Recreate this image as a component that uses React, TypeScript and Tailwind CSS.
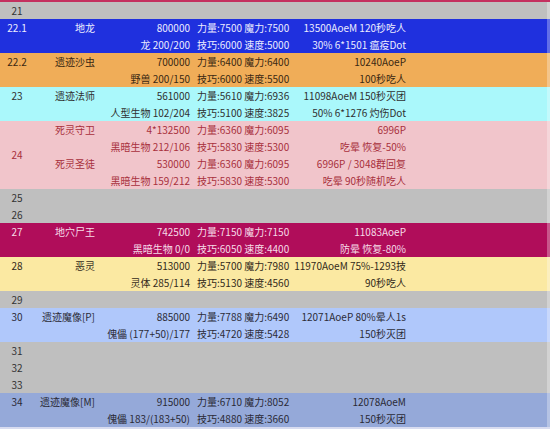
type Line = { name?: string; hp?: string; stats?: string; note?: string }

type Group = { id: string; bg: string; text: string; center?: boolean; lines: Line[] }

const GROUPS: Group[] = [
  { id: '21', bg: 'bg-[#bfbfbf]', text: 'text-[#333333]', lines: [{}] },
  {
    id: '22.1',
    bg: 'bg-[#1f30de]',
    text: 'text-[#ececff]',
    lines: [
      { name: '地龙', hp: '800000', stats: '力量:7500 魔力:7500', note: '13500AoeM 120秒吃人' },
      { hp: '龙 200/200', stats: '技巧:6000 速度:5000', note: '30% 6*1501 瘟疫Dot' }
    ]
  },
  {
    id: '22.2',
    bg: 'bg-[#f0ad58]',
    text: 'text-[#3a2812]',
    lines: [
      { name: '遗迹沙虫', hp: '700000', stats: '力量:6400 魔力:6400', note: '10240AoeP' },
      { hp: '野兽 200/150', stats: '技巧:6000 速度:5500', note: '100秒吃人' }
    ]
  },
  {
    id: '23',
    bg: 'bg-[#aaf8fb]',
    text: 'text-[#303030]',
    lines: [
      { name: '遗迹法师', hp: '561000', stats: '力量:5610 魔力:6936', note: '11098AoeM 150秒灭团' },
      { hp: '人型生物 102/204', stats: '技巧:5100 速度:3825', note: '50% 6*1276 灼伤Dot' }
    ]
  },
  {
    id: '24',
    bg: 'bg-[#f1c5cb]',
    text: 'text-[#a8303c]',
    center: true,
    lines: [
      { name: '死灵守卫', hp: '4*132500', stats: '力量:6360 魔力:6095', note: '6996P' },
      { hp: '黑暗生物 212/106', stats: '技巧:5830 速度:5300', note: '吃晕 恢复-50%' },
      { name: '死灵圣徒', hp: '530000', stats: '力量:6360 魔力:6095', note: '6996P / 3048群回复' },
      { hp: '黑暗生物 159/212', stats: '技巧:5830 速度:5300', note: '吃晕 90秒随机吃人' }
    ]
  },
  { id: '25', bg: 'bg-[#bfbfbf]', text: 'text-[#333333]', lines: [{}] },
  { id: '26', bg: 'bg-[#bfbfbf]', text: 'text-[#333333]', lines: [{}] },
  {
    id: '27',
    bg: 'bg-[#b00d5a]',
    text: 'text-[#f6dce8]',
    lines: [
      { name: '地穴尸王', hp: '742500', stats: '力量:7150 魔力:7150', note: '11083AoeP' },
      { hp: '黑暗生物 0/0', stats: '技巧:6050 速度:4400', note: '防晕 恢复-80%' }
    ]
  },
  {
    id: '28',
    bg: 'bg-[#fbe9a2]',
    text: 'text-[#33291a]',
    lines: [
      { name: '恶灵', hp: '513000', stats: '力量:5700 魔力:7980', note: '11970AoeM 75%-1293技' },
      { hp: '灵体 285/114', stats: '技巧:5130 速度:4560', note: '90秒吃人' }
    ]
  },
  { id: '29', bg: 'bg-[#bfbfbf]', text: 'text-[#333333]', lines: [{}] },
  {
    id: '30',
    bg: 'bg-[#b0c8fb]',
    text: 'text-[#2c2c38]',
    lines: [
      { name: '遗迹魔像[P]', hp: '885000', stats: '力量:7788 魔力:6490', note: '12071AoeP 80%晕人1s' },
      { hp: '傀儡 (177+50)/177', stats: '技巧:4720 速度:5428', note: '150秒灭团' }
    ]
  },
  { id: '31', bg: 'bg-[#bfbfbf]', text: 'text-[#333333]', lines: [{}] },
  { id: '32', bg: 'bg-[#bfbfbf]', text: 'text-[#333333]', lines: [{}] },
  { id: '33', bg: 'bg-[#bfbfbf]', text: 'text-[#333333]', lines: [{}] },
  {
    id: '34',
    bg: 'bg-[#95a9d9]',
    text: 'text-[#2a2a36]',
    lines: [
      { name: '遗迹魔像[M]', hp: '915000', stats: '力量:6710 魔力:8052', note: '12078AoeM' },
      { hp: '傀儡 183/(183+50)', stats: '技巧:4880 速度:3660', note: '150秒灭团' }
    ]
  }
]

export default function App() {
  return (
    <div className="flex h-[429px] w-[550px] flex-col overflow-hidden bg-[#bfbfbf] font-['Noto_Sans_CJK_SC',sans-serif] text-[10px]">
      {/* top rule */}
      <div className="h-[2px] w-full shrink-0 bg-[#c4305f]" />

      {GROUPS.map((g) => (
        <div key={g.id} className={`flex shrink-0 border-r-[3px] border-white/30 ${g.bg} ${g.text}`}>
          {/* id: first line, or centred for merged rows */}
          <div
            className={`flex w-8 shrink-0 justify-center pl-[2px] leading-none ${
              g.center ? 'items-center' : 'h-[17px] items-center'
            }`}
          >
            {g.id}
          </div>

          {/* lines */}
          <div className="flex flex-1 flex-col">
            {g.lines.map((l, i) => (
              <div key={i} className="flex h-[17px] items-center whitespace-nowrap leading-none">
                <span className="w-[63px] shrink-0 text-right">{l.name}</span>
                <span className="w-[95px] shrink-0 text-right">{l.hp}</span>
                <span className="w-[102px] shrink-0 pl-[7px]">{l.stats}</span>
                <span className="w-[114px] shrink-0 text-right">{l.note}</span>
              </div>
            ))}
          </div>
        </div>
      ))}

      {/* bottom rule */}
      <div className="h-[2px] w-full shrink-0 bg-[#d8dcf0]" />
      <div className="h-[2px] w-full shrink-0 bg-[#9b0fae]" />
    </div>
  )
}
